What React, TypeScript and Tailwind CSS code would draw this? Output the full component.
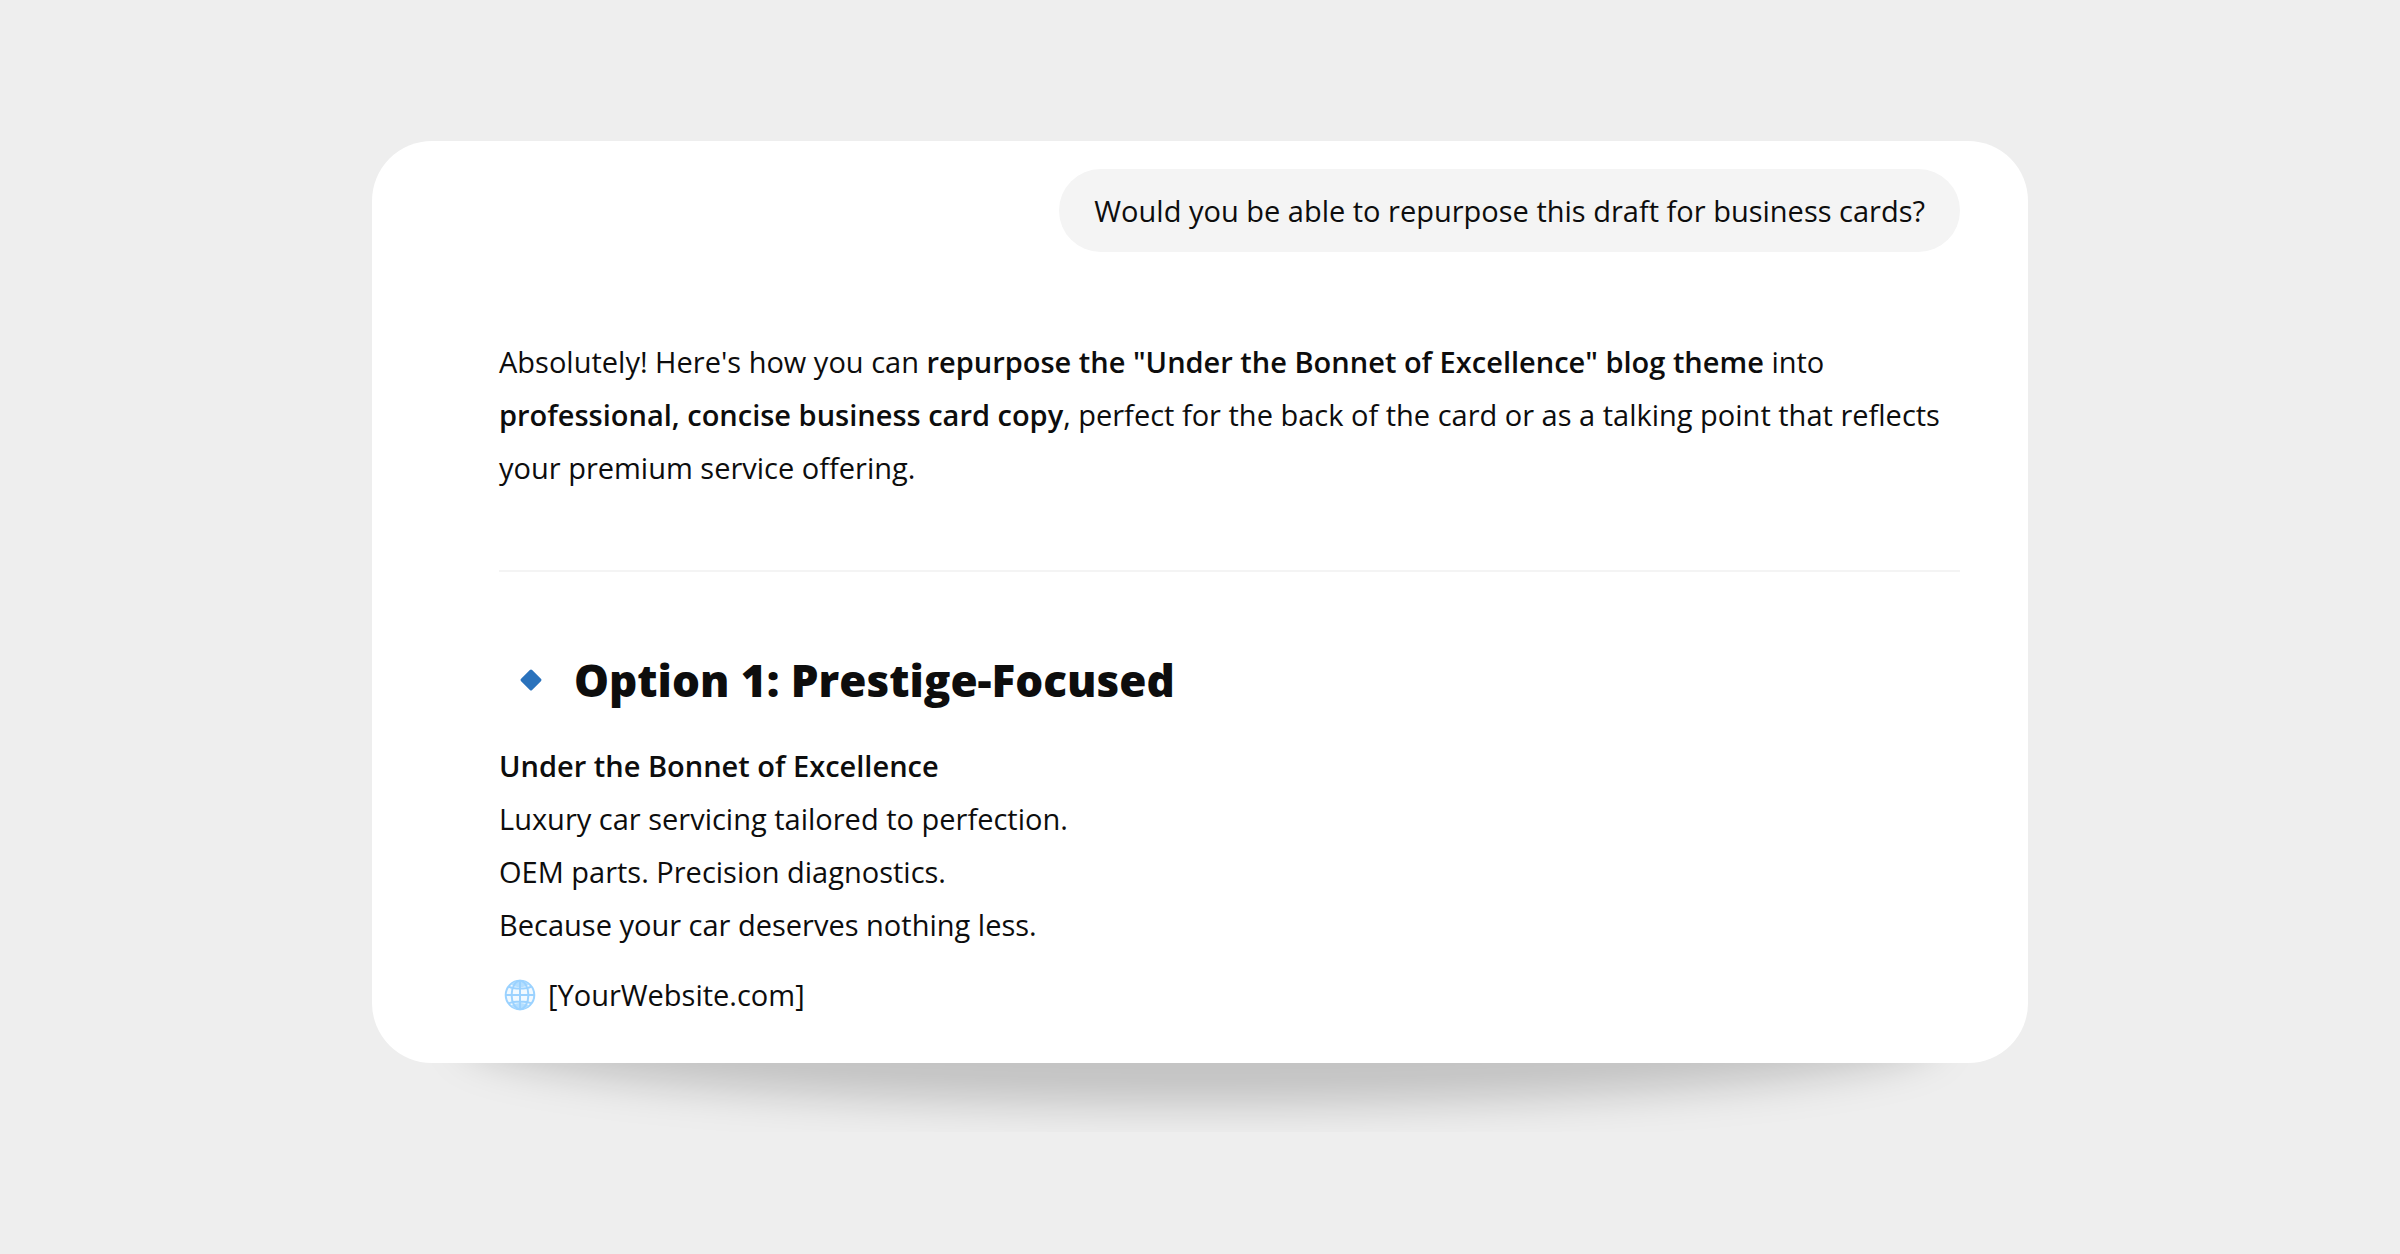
function DiamondIcon() {
  return (
    <svg viewBox="0 0 22 22" className="ml-[21px] size-[22px] shrink-0" aria-hidden="true">
      <rect x="3.2" y="3.2" width="15.6" height="15.6" rx="1.6" transform="rotate(45 11 11)" fill="#2a72bc" />
    </svg>
  );
}

function GlobeIcon() {
  return (
    <svg viewBox="0 0 32 32" className="ml-[5px] size-8 shrink-0" fill="none" stroke="#9bd2ff" strokeWidth="2" aria-hidden="true">
      <circle cx="16" cy="16" r="14.3" fill="#f1f9ff" />
      <path d="M7 5.2C11 9 21 9 25 5.2L21 2.4C18 1.4 14 1.4 11 2.4Z" fill="#b3deff" stroke="none" />
      <path d="M7 26.8C11 23 21 23 25 26.8L21 29.6C18 30.6 14 30.6 11 29.6Z" fill="#b3deff" stroke="none" />
      <ellipse cx="16" cy="16" rx="8.4" ry="14.3" />
      <path d="M16 1.7V30.3M1.7 16H30.3M4.6 7.6C10 10.2 22 10.2 27.4 7.6M4.6 24.4C10 21.8 22 21.8 27.4 24.4" />
    </svg>
  );
}

function CardShadow() {
  return (
    <div className="absolute -inset-x-[60px] -bottom-[69px] h-[180px] overflow-hidden" aria-hidden="true">
      <div className="absolute inset-x-[148px] bottom-[27px] h-[136px] rounded-[50%] bg-black/18 blur-[20px]" />
    </div>
  );
}

export default function App() {
  return (
    <main className="min-h-screen bg-[#eeeeee] pt-[141px] pb-16 font-['Open_Sans','Noto_Sans',sans-serif] text-[29px] leading-[53px] text-[#0d0d0d]">
      <div className="relative mx-auto w-[69%]">
        <CardShadow />
        <section className="relative flex flex-col rounded-[60px] bg-white pt-7 pr-[68px] pb-[42px] pl-[127px]">
          <p className="self-end rounded-[42px] bg-[#f4f4f4] px-[35px] py-[15px]">
            Would you be able to repurpose this draft for business cards?
          </p>

          <article className="mt-[83px]">
            <p>
              Absolutely! Here's how you can{' '}
              <strong className="font-semibold">repurpose the "Under the Bonnet of Excellence" blog theme</strong> into{' '}
              <strong className="font-semibold">professional, concise business card copy</strong>, perfect for the back of
              the card or as a talking point that reflects your premium service offering.
            </p>

            <hr className="mt-[76px] border-t-2 border-[#f4f4f4]" />

            <h2 className="mt-20 flex items-center gap-8 text-[44px] leading-[56px] font-extrabold">
              <DiamondIcon />
              Option 1: Prestige-Focused
            </h2>

            <p className="mt-[31px]">
              <strong className="font-semibold">Under the Bonnet of Excellence</strong>
              <br />
              Luxury car servicing tailored to perfection.
              <br />
              OEM parts. Precision diagnostics.
              <br />
              Because your car deserves nothing less.
            </p>

            <p className="mt-[17px] flex items-center gap-3">
              <GlobeIcon />
              [YourWebsite.com]
            </p>
          </article>
        </section>
      </div>
    </main>
  );
}
